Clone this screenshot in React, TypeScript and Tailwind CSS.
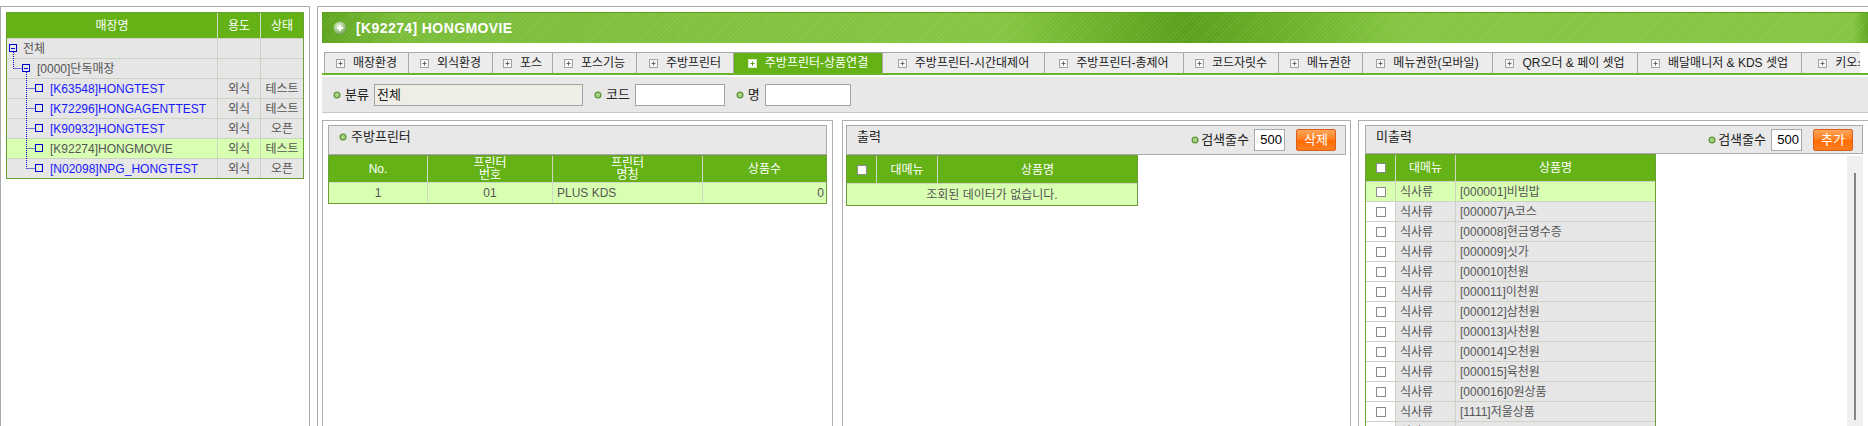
import React from 'react'

const tabs = [
  { label: '매장환경', w: 'w-[84px]' },
  { label: '외식환경', w: 'w-[84px]' },
  { label: '포스', w: 'w-[60px]' },
  { label: '포스기능', w: 'w-[84px]' },
  { label: '주방프린터', w: 'w-[97px]' },
  { label: '주방프린터-상품연결', w: 'w-[149px]', active: true },
  { label: '주방프린터-시간대제어', w: 'w-[162px]' },
  { label: '주방프린터-총제어', w: 'w-[139px]' },
  { label: '코드자릿수', w: 'w-[95px]' },
  { label: '메뉴권한', w: 'w-[84px]' },
  { label: '메뉴권한(모바일)', w: 'w-[130px]' },
  { label: 'QR오더 & 페이 셋업', w: 'w-[145px]' },
  { label: '배달매니저 & KDS 셋업', w: 'w-[164px]' },
  { label: '키오스크 셋업', w: 'w-[120px]' },
]

const stores = [
  { name: '[K63548]HONGTEST', use: '외식', state: '테스트' },
  { name: '[K72296]HONGAGENTTEST', use: '외식', state: '테스트' },
  { name: '[K90932]HONGTEST', use: '외식', state: '오픈' },
  { name: '[K92274]HONGMOVIE', use: '외식', state: '테스트', selected: true },
  { name: '[N02098]NPG_HONGTEST', use: '외식', state: '오픈', last: true },
]

const menus = [
  '[000001]비빔밥',
  '[000007]A코스',
  '[000008]현금영수증',
  '[000009]싯가',
  '[000010]천원',
  '[000011]이천원',
  '[000012]삼천원',
  '[000013]사천원',
  '[000014]오천원',
  '[000015]육천원',
  '[000016]0원상품',
  '[1111]저울상품',
  '',
]

const blue = '#0000cc'

function Bullet() {
  return (
    <svg width="8" height="8" viewBox="0 0 8 8" className="shrink-0">
      <circle cx="4" cy="4" r="3.5" fill="#5f9538" />
      <circle cx="4" cy="4" r="2.2" fill="#a9d487" />
    </svg>
  )
}

function PlusBox({ active }: { active?: boolean }) {
  return (
    <svg width="9" height="9" viewBox="0 0 9 9" className="shrink-0">
      <rect x="0.5" y="0.5" width="8" height="8" fill={active ? '#ffffff' : '#f7f7f7'} stroke={active ? '#d8ecc4' : '#a4a4a4'} />
      <path d="M4.5 2.5v4M2.5 4.5h4" stroke={active ? '#4e9a12' : '#666'} strokeWidth="1" />
    </svg>
  )
}

function Check() {
  return <span className="inline-block w-[10px] h-[10px] border border-[#8a8a8a] bg-white" />
}

// tree connectors for the store list
function TreeRoot() {
  return (
    <svg width="16" height="19" className="shrink-0 overflow-visible">
      <rect x="2.5" y="5.5" width="7" height="7" fill="none" stroke={blue} />
      <path d="M4 9.5h4" stroke={blue} />
      <path d="M6.5 13v7" stroke={blue} strokeDasharray="1 1" />
    </svg>
  )
}

function TreeGroup() {
  return (
    <svg width="30" height="19" className="shrink-0 overflow-visible">
      <path d="M6.5 -1v10.5M6.5 9.5h9" stroke={blue} strokeDasharray="1 1" />
      <rect x="15.5" y="5.5" width="7" height="7" fill="none" stroke={blue} />
      <path d="M17 9.5h4" stroke={blue} />
      <path d="M19.5 13v7" stroke={blue} strokeDasharray="1 1" />
    </svg>
  )
}

function TreeLeaf({ last }: { last?: boolean }) {
  return (
    <svg width="43" height="19" className="shrink-0 overflow-visible">
      <path d={last ? 'M19.5 -1v10.5' : 'M19.5 -1v21'} stroke={blue} strokeDasharray="1 1" />
      <path d="M19.5 9.5h9" stroke={blue} strokeDasharray="1 1" />
      <rect x="28.5" y="5.5" width="7" height="7" fill="none" stroke={blue} />
    </svg>
  )
}

function StoreTree() {
  const cell = 'flex items-center justify-center border-r border-[#cbd3c4]'
  return (
    <div className="w-[310px] h-[420px] shrink-0 border border-b-0 border-[#aaaaaa] pt-[5px] pl-[5px]">
      <div className="w-[298px] border border-[#6b9e35]">
        <div className="grid grid-cols-[211px_43px_42px] h-[25px] bg-[#64b215] text-white">
          <div className="flex items-center justify-center border-r border-[#d4dccb]">매장명</div>
          <div className="flex items-center justify-center border-r border-[#d4dccb]">용도</div>
          <div className="flex items-center justify-center">상태</div>
        </div>
        <div className="grid grid-cols-[211px_43px_42px] h-[20px] border-t border-[#cbd3c4] bg-[#e6e6e6]">
          <div className="flex items-center border-r border-[#cbd3c4]">
            <TreeRoot />
            <span>전체</span>
          </div>
          <div className={cell} />
          <div />
        </div>
        <div className="grid grid-cols-[211px_43px_42px] h-[20px] border-t border-[#cbd3c4] bg-[#e6e6e6]">
          <div className="flex items-center border-r border-[#cbd3c4]">
            <TreeGroup />
            <span>[0000]단독매장</span>
          </div>
          <div className={cell} />
          <div />
        </div>
        {stores.map((s) => (
          <div
            key={s.name}
            className={`grid grid-cols-[211px_43px_42px] h-[20px] border-t border-[#cbd3c4] ${s.selected ? 'bg-[#d9ffb3]' : 'bg-[#e6e6e6]'}`}
          >
            <div className="flex items-center border-r border-[#cbd3c4]">
              <TreeLeaf last={s.last} />
              <span className={s.selected ? 'text-[#555]' : 'text-[#1a1aff]'}>{s.name}</span>
            </div>
            <div className={cell}>{s.use}</div>
            <div className="flex items-center justify-center">{s.state}</div>
          </div>
        ))}
      </div>
    </div>
  )
}

function TitleBar() {
  return (
    <div className="h-[31px] flex items-center pl-[11px] gap-[9px] border-t border-[#5c9d22] bg-[repeating-linear-gradient(135deg,rgba(255,255,255,0.08)_0px,rgba(255,255,255,0.08)_1px,transparent_1px,transparent_3px),linear-gradient(90deg,#5da41d_0%,#7abd38_5%,#84c641_44%,#6cb22a_50%,#589f1a_56%,#6db42b_63%,#84c641_70%,#84c641_99%,#5fa61f_100%)]">
      <svg width="14" height="14" viewBox="0 0 14 14">
        <defs>
          <radialGradient id="titleIcon" cx="40%" cy="35%" r="65%">
            <stop offset="0" stopColor="#e4f2da" />
            <stop offset="0.6" stopColor="#a5cc8e" />
            <stop offset="1" stopColor="#6f9e58" />
          </radialGradient>
        </defs>
        <circle cx="7" cy="7" r="6.5" fill="url(#titleIcon)" />
        <path d="M7 4v6M4 7h6" stroke="#fff" strokeWidth="2" />
      </svg>
      <span className="text-white font-bold text-[14px] tracking-[0.4px]">[K92274] HONGMOVIE</span>
    </div>
  )
}

function Tabs() {
  return (
    <div className="mt-[9px] h-[21px] pl-[2px] w-[1538px] flex overflow-hidden">
      {tabs.map((t) => (
        <div
          key={t.label}
          className={`${t.w} shrink-0 h-[21px] border-l border-t border-[#a9a9a9] flex items-center justify-center gap-[8px] whitespace-nowrap ${t.active ? 'bg-[#64b215] text-white' : 'bg-[#ececec] text-[#222]'}`}
        >
          <PlusBox active={t.active} />
          <span>{t.label}</span>
        </div>
      ))}
    </div>
  )
}

function SearchBar() {
  return (
    <div className="h-[36px] bg-[#e8e8e8] border-b border-[#c8c8c8] flex items-center pl-[11px] text-[13px] text-[#222]">
      <Bullet />
      <span className="ml-[4px]">분류</span>
      <div className="ml-[5px] w-[209px] h-[22px] border border-[#a3a3a3] bg-[#efeee6] flex items-center pl-[2px]">전체</div>
      <span className="ml-[11px]"><Bullet /></span>
      <span className="ml-[4px]">코드</span>
      <div className="ml-[5px] w-[90px] h-[22px] border border-[#a3a3a3] bg-white" />
      <span className="ml-[11px]"><Bullet /></span>
      <span className="ml-[4px]">명</span>
      <div className="ml-[5px] w-[86px] h-[22px] border border-[#a3a3a3] bg-white" />
    </div>
  )
}

function SearchCount({ label }: { label: string }) {
  return (
    <div className="flex items-center text-[13px] text-[#222]">
      <Bullet />
      <span className="ml-[2px]">검색줄수</span>
      <div className="ml-[5px] w-[31px] h-[22px] border border-[#aaaaaa] bg-white flex items-center justify-end pr-[2px] text-black">500</div>
      <button className="ml-[11px] w-[40px] h-[22px] rounded-[2px] border border-[#d9601a] bg-[linear-gradient(#ffa459,#ff7d1c_50%,#ff6a00_52%,#ff7f22)] text-white text-[13px] leading-[20px]">
        {label}
      </button>
    </div>
  )
}

function PanelHeader({ title, bullet, right, h = 'h-[30px]' }: { title: string; bullet?: boolean; right?: React.ReactNode; h?: string }) {
  return (
    <div className={`${h} border border-[#ababab] bg-[#e8e8e8] flex items-center justify-between pl-[10px] pr-[9px]`}>
      <div className="self-start mt-[3px] leading-[16px] text-[13px] text-[#222] flex items-center gap-[4px]">
        {bullet && <Bullet />}
        <span>{title}</span>
      </div>
      {right}
    </div>
  )
}

function PrinterPanel() {
  const hc = 'flex flex-col items-center justify-center border-r border-[#cfd8c6] leading-[12px]'
  return (
    <div className="w-[511px] h-[306px] shrink-0 border border-b-0 border-[#b0b0b0] pt-[4px] px-[5px]">
      <PanelHeader title="주방프린터" bullet />
      <div className="border border-[#6b9e35]">
        <div className="grid grid-cols-[99px_125px_150px_1fr] h-[26px] bg-[#64b215] text-white">
          <div className={hc}>No.</div>
          <div className={hc}>
            <span>프린터</span>
            <span>번호</span>
          </div>
          <div className={hc}>
            <span>프린터</span>
            <span>명칭</span>
          </div>
          <div className="flex items-center justify-center">상품수</div>
        </div>
        <div className="grid grid-cols-[99px_125px_150px_1fr] h-[21px] border-t border-[#cfd8c6] bg-[#d9ffb3]">
          <div className="flex items-center justify-center border-r border-[#cfd8c6]">1</div>
          <div className="flex items-center justify-center border-r border-[#cfd8c6]">01</div>
          <div className="flex items-center pl-[4px] border-r border-[#cfd8c6]">PLUS KDS</div>
          <div className="flex items-center justify-end pr-[2px]">0</div>
        </div>
      </div>
    </div>
  )
}

function OutputPanel() {
  return (
    <div className="ml-[9px] w-[509px] h-[306px] shrink-0 border border-b-0 border-[#b0b0b0] pt-[4px] pl-[3px] pr-[4px]">
      <PanelHeader title="출력" right={<SearchCount label="삭제" />} />
      <div className="w-[292px] border border-[#6b9e35]">
        <div className="grid grid-cols-[30px_61px_1fr] h-[27px] bg-[#64b215] text-white">
          <div className="flex items-center justify-center border-r border-[#cfd8c6]"><Check /></div>
          <div className="flex items-center justify-center border-r border-[#cfd8c6]">대메뉴</div>
          <div className="flex items-center justify-center">상품명</div>
        </div>
        <div className="h-[22px] border-t border-[#cfd8c6] bg-[#d9ffb3] flex items-center justify-center">
          조회된 데이터가 없습니다.
        </div>
      </div>
    </div>
  )
}

function NonOutputPanel() {
  return (
    <div className="ml-[7px] w-[511px] h-[306px] shrink-0 border border-b-0 border-[#b0b0b0] pt-[4px] pl-[6px] pr-[5px]">
      <PanelHeader title="미출력" h="h-[29px]" right={<SearchCount label="추가" />} />
      <div className="flex justify-between items-start">
        <div className="w-[291px] border border-[#6b9e35]">
          <div className="grid grid-cols-[30px_60px_1fr] h-[26px] bg-[#64b215] text-white">
            <div className="flex items-center justify-center border-r border-[#cfd8c6]"><Check /></div>
            <div className="flex items-center justify-center border-r border-[#cfd8c6]">대메뉴</div>
            <div className="flex items-center justify-center">상품명</div>
          </div>
          {menus.map((m, i) => (
            <div
              key={i}
              className={`grid grid-cols-[30px_60px_1fr] h-[20px] border-t border-[#cbd3c4] ${i === 0 ? 'bg-[#d9ffb3]' : 'bg-[#e6e6e6]'}`}
            >
              <div className={`flex items-center justify-center border-r border-[#cbd3c4] ${i === 0 ? '' : 'bg-white'}`}>
                <Check />
              </div>
              <div className="flex items-center pl-[4px] border-r border-[#cbd3c4]">식사류</div>
              <div className="flex items-center pl-[4px]">{m}</div>
            </div>
          ))}
        </div>
        <div className="mt-[2px] w-[16px] h-[280px] bg-[#efefef] pt-[17px] pl-[7px]">
          <div className="w-[2px] h-[247px] bg-[#838383]" />
        </div>
      </div>
    </div>
  )
}

export default function App() {
  return (
    <div className="w-[1868px] h-[426px] overflow-hidden bg-white flex items-start pt-[6px] font-['Liberation_Sans','Noto_Sans_CJK_KR',sans-serif] text-[12px] text-[#555]">
      <StoreTree />
      <div className="ml-[7px] w-[1552px] h-[420px] shrink-0 border-l border-t border-[#aaaaaa] pt-[5px] pl-[4px] flex flex-col">
        <TitleBar />
        <Tabs />
        <div className="h-[2px] bg-[#6ab42a]" />
        <div className="mt-[2px]">
          <SearchBar />
        </div>
        <div className="mt-[7px] flex">
          <PrinterPanel />
          <OutputPanel />
          <NonOutputPanel />
        </div>
      </div>
    </div>
  )
}
